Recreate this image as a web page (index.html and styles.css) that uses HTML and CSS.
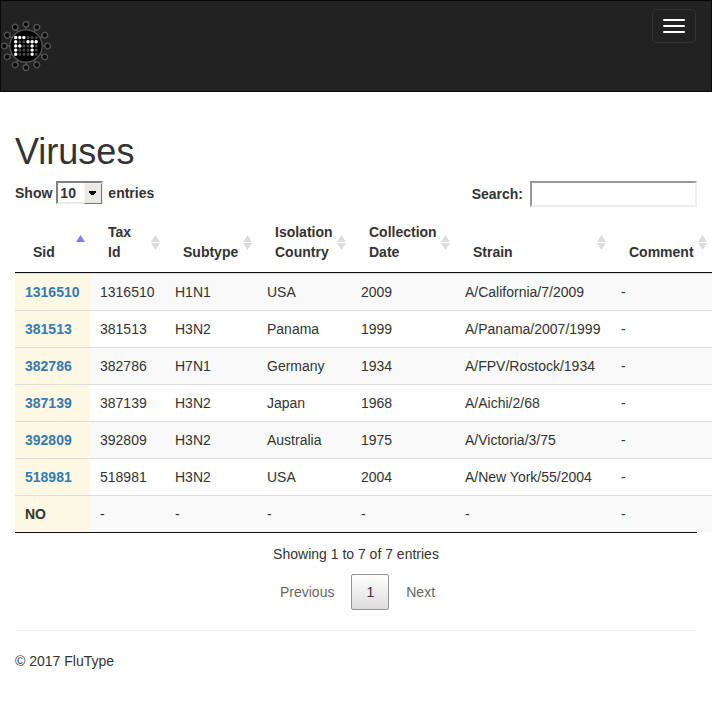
FILE: index.html
```html
<!DOCTYPE html>
<html lang="en">
<head>
<meta charset="utf-8">
<title>FluType</title>
<link rel="stylesheet" href="styles.css">
</head>
<body>
<nav class="navbar">
  <a class="brand" href="#" aria-label="FluType">
    <svg class="logo" width="52" height="52" viewBox="0 0 52 52">
      <defs><g id="spike"><path d="M26 10V7" stroke="#555" stroke-width="1.4"/><circle cx="26" cy="4.3" r="2.8" fill="#080808" stroke="#555" stroke-width="1.3"/></g></defs>
      <use href="#spike"/><use href="#spike" transform="rotate(30 26 26)"/><use href="#spike" transform="rotate(60 26 26)"/><use href="#spike" transform="rotate(90 26 26)"/><use href="#spike" transform="rotate(120 26 26)"/><use href="#spike" transform="rotate(150 26 26)"/><use href="#spike" transform="rotate(180 26 26)"/><use href="#spike" transform="rotate(210 26 26)"/><use href="#spike" transform="rotate(240 26 26)"/><use href="#spike" transform="rotate(270 26 26)"/><use href="#spike" transform="rotate(300 26 26)"/><use href="#spike" transform="rotate(330 26 26)"/>
      <circle cx="26" cy="26" r="16.2" fill="#000" stroke="#555" stroke-width="1.3"/>
      <g fill="none" stroke="#484848" stroke-width="3" stroke-linecap="round" stroke-dasharray="0 4.1">
        <path d="M15.7 17.5h20.8M15.7 21.7h20.8M15.7 25.9h20.8M15.7 30.1h20.8M15.7 34.3h20.8"/>
      </g>
      <g fill="none" stroke="#fff" stroke-width="3.4" stroke-linecap="round" stroke-dasharray="0 4.1">
        <path d="M15.7 17.5h8.4M15.7 21.7h.1M28 21.7h8.4M15.7 25.9h4.2M32.1 25.9h.1M15.7 30.1h.1M32.1 30.1h.1M15.7 34.3h.1M32.1 34.3h.1"/>
      </g>
    </svg>
  </a>
  <button class="toggle" aria-label="Menu"><span></span><span></span><span></span></button>
</nav>
<main class="container">
  <h1>Viruses</h1>
  <div class="controls">
    <label class="length">Show <span class="select"><select><option>10</option></select></span> entries</label>
    <label class="search">Search:<input type="search"></label>
  </div>
  <table>
    <colgroup><col class="c1"><col class="c2"><col class="c3"><col class="c4"><col class="c5"><col class="c6"><col class="c7"></colgroup>
    <thead><tr><th class="asc">Sid</th><th>Tax Id</th><th>Subtype</th><th>Isolation Country</th><th>Collection Date</th><th>Strain</th><th>Comment</th></tr></thead>
    <tbody>
      <tr><td><a href="#">1316510</a></td><td>1316510</td><td>H1N1</td><td>USA</td><td>2009</td><td>A/California/7/2009</td><td>-</td></tr>
      <tr><td><a href="#">381513</a></td><td>381513</td><td>H3N2</td><td>Panama</td><td>1999</td><td>A/Panama/2007/1999</td><td>-</td></tr>
      <tr><td><a href="#">382786</a></td><td>382786</td><td>H7N1</td><td>Germany</td><td>1934</td><td>A/FPV/Rostock/1934</td><td>-</td></tr>
      <tr><td><a href="#">387139</a></td><td>387139</td><td>H3N2</td><td>Japan</td><td>1968</td><td>A/Aichi/2/68</td><td>-</td></tr>
      <tr><td><a href="#">392809</a></td><td>392809</td><td>H3N2</td><td>Australia</td><td>1975</td><td>A/Victoria/3/75</td><td>-</td></tr>
      <tr><td><a href="#">518981</a></td><td>518981</td><td>H3N2</td><td>USA</td><td>2004</td><td>A/New York/55/2004</td><td>-</td></tr>
      <tr><td>NO</td><td>-</td><td>-</td><td>-</td><td>-</td><td>-</td><td>-</td></tr>
    </tbody>
  </table>
  <div class="info">Showing 1 to 7 of 7 entries</div>
  <div class="pages"><a>Previous</a><a class="current">1</a><a>Next</a></div>
  <hr>
  <footer>© 2017 FluType</footer>
</main>
</body>
</html>
```
FILE: styles.css
```css
* { box-sizing: border-box; }
html { overflow: hidden; }
body { margin: 0; font: 14px/20px "Liberation Sans", Arial, sans-serif; color: #333; background: #fff; }
a { color: #337ab7; text-decoration: none; }
.navbar { display: flex; justify-content: space-between; align-items: flex-start; height: 92px; background: #222; border: 1px solid #080808; padding: 8px 15px 0 0; }
.brand { margin: 11px 0 0 -1px; }
.logo { display: block; }
.toggle { width: 44px; height: 34px; padding: 0 10px; display: flex; flex-direction: column; justify-content: center; gap: 4px; background: transparent; border: 1px solid #333; border-radius: 4px; }
.toggle span { display: block; width: 22px; height: 2px; background: #fff; border-radius: 1px; }
.container { padding: 0 15px; }
h1 { margin: 40px 0 9px; font-size: 36px; line-height: 40px; font-weight: normal; }
.controls { display: flex; justify-content: space-between; height: 31px; font-weight: bold; }
.length { display: flex; height: 23px; line-height: 25px; gap: 4px; }
.select { position: relative; width: 47px; height: 23px; margin-right: 1px; }
.select select { appearance: none; display: block; width: 47px; height: 23px; margin: 0; padding: 1px 2px 0; border: 2px solid; border-color: #808080 #ece9e4 #ece9e4 #808080; border-radius: 0; background: #fff; font: inherit; line-height: 19px; color: #333; }
.select::after { content: ""; position: absolute; right: 1px; top: 2px; width: 16px; height: 19px; border: 1px solid; border-color: #f4f2ee #777 #777 #f4f2ee; background: linear-gradient(#000,#000) 4px 7px/7px 1px no-repeat, linear-gradient(#000,#000) 4px 8px/7px 1px no-repeat, linear-gradient(#000,#000) 5px 9px/5px 1px no-repeat, linear-gradient(#000,#000) 6px 10px/3px 1px no-repeat, #ece9e4; }
.search { display: flex; line-height: 26px; }
.search input { width: 167px; height: 26px; margin: 0 0 0 7px; padding: 1px; border: 2px solid; border-color: #999 #eee #eee #999; border-radius: 0; background: #fff; }
table { width: 697px; table-layout: fixed; border-collapse: separate; border-spacing: 0; }
.c1, .c2 { width: 75px; }
.c3 { width: 92px; }
.c4 { width: 94px; }
.c5 { width: 104px; }
.c6 { width: 156px; }
.c7 { width: 101px; }
th { position: relative; height: 61px; padding: 10px 18px; vertical-align: bottom; text-align: left; border-bottom: 1px solid #111; }
th::before, th::after { content: ""; position: absolute; right: 5px; width: 9px; height: 7px; background: #dcdcdc; }
th::before { top: 23px; clip-path: polygon(50% 0, 100% 100%, 0 100%); }
th::after { top: 31px; clip-path: polygon(0 0, 100% 0, 50% 100%); }
th.asc::before { background: #8080e0; }
th.asc::after { display: none; }
td { height: 37px; padding: 8px 10px; border-top: 1px solid #ddd; white-space: nowrap; }
tbody tr:nth-child(odd) { background: #f9f9f9; }
td:first-child { background: #fcf8e3; font-weight: bold; }
.info { border-top: 1px solid #111; padding-top: 11px; text-align: center; }
.pages { display: flex; justify-content: center; margin-top: 10px; gap: 2px; padding-left: 3px; }
.pages a { height: 36px; padding: 7px 14px; border: 1px solid transparent; border-radius: 2px; color: #666; }
.pages .current { color: #333; border-color: #979797; background: linear-gradient(#fff, #dcdcdc); }
hr { margin: 20px 0; border: 0; border-top: 1px solid #eee; }
```
